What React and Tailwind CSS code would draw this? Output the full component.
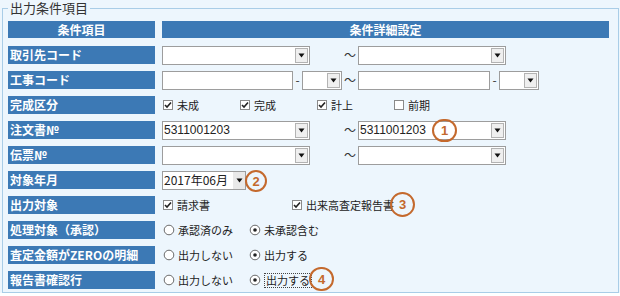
import React from "react";

const JP = "font-['Noto_Sans_CJK_JP','Noto_Sans',sans-serif]";

function Arrow() {
  return (
    <svg width="7" height="5" viewBox="0 0 7 5">
      <polygon points="0.5,0.5 6.5,0.5 3.5,4.5" fill="#111" />
    </svg>
  );
}

function Select({ width, value }) {
  return (
    <div className={`${width} h-[19px] bg-white border border-[#9d9d9d] flex items-center justify-between pl-[1px] pr-[1px]`}>
      <span className="text-[12px] leading-none text-[#222] font-['Liberation_Sans',sans-serif]">{value}</span>
      <span className="w-[13px] h-[15px] bg-[#efefef] border border-[#b3b3b3] flex items-center justify-center">
        <Arrow />
      </span>
    </div>
  );
}

function TextInput({ width }) {
  return <div className={`${width} h-[19px] bg-white border border-[#9d9d9d]`} />;
}

function Check({ checked, label, width }) {
  return (
    <div className={`${width} flex items-center gap-[4px]`}>
      <span className="ml-[1px] w-[10px] h-[10px] bg-white border border-[#8a8a8a] flex items-center justify-center">
        {checked && (
          <svg width="8" height="8" viewBox="0 0 8 8">
            <path d="M1 4 L3 6 L7 1.5" stroke="#222" strokeWidth="1.6" fill="none" />
          </svg>
        )}
      </span>
      <span className="text-[11px] leading-none text-[#222] whitespace-nowrap">{label}</span>
    </div>
  );
}

function Radio({ checked, label, width, focus }) {
  return (
    <div className={`${width} flex items-center gap-[3px]`}>
      <svg width="12" height="12" viewBox="0 0 12 12" className="ml-[1px]">
        <circle cx="6" cy="6" r="4.8" fill="#fff" stroke="#6b6b6b" strokeWidth="1" />
        {checked && <circle cx="6" cy="6" r="1.8" fill="#222" />}
      </svg>
      <span className={`text-[11px] leading-none text-[#222] whitespace-nowrap ${focus ? "border border-dotted border-[#444] px-[1px] py-[1px]" : ""}`}>{label}</span>
    </div>
  );
}

function Mark({ n, pos, size }) {
  return (
    <span className={`absolute ${pos} ${size} rounded-full border-2 border-[#c4692d] flex items-center justify-center text-[13px] font-bold leading-none text-[#c4692d] font-['Liberation_Sans',sans-serif]`}>
      {n}
    </span>
  );
}

const Tilde = () => <span className="w-[16px] text-center text-[12px] leading-none text-[#333]">～</span>;

function Row({ label, children }) {
  return (
    <div className="flex h-[25px] items-start gap-[7px]">
      <div className="w-[147px] h-[18px] bg-[#3c79b5] pl-[2px] flex items-center text-white text-[12px] font-bold leading-none whitespace-nowrap">
        {label}
      </div>
      <div className="relative w-[447px] h-[18px] flex items-center">{children}</div>
    </div>
  );
}

export default function App() {
  return (
    <div className={`w-[620px] h-[296px] bg-white ${JP}`}>
      <div className="h-[293px] bg-[#edf6fd] pl-[2px]">
        <fieldset className="w-[617px] h-[293px] border border-[#a9cde7] pl-[5px]">
          <legend className="px-[2px] text-[13px] leading-[16px] text-[#333]">出力条件項目</legend>
          <div className="mt-[5px] flex flex-col">
            <div className="flex h-[25px] items-start gap-[7px]">
              <div className="w-[147px] h-[17px] bg-[#3c79b5] flex items-center justify-center text-white text-[12px] font-bold leading-none">条件項目</div>
              <div className="w-[447px] h-[17px] bg-[#3c79b5] flex items-center justify-center text-white text-[12px] font-bold leading-none">条件詳細設定</div>
            </div>

            <Row label="取引先コード">
              <div className="w-[180px]"><Select width="w-[148px]" /></div>
              <Tilde />
              <Select width="w-[148px]" />
            </Row>

            <Row label="工事コード">
              <div className="w-[180px] flex items-center">
                <TextInput width="w-[131px]" />
                <span className="w-[9px] text-center text-[12px] leading-none text-[#333]">-</span>
                <Select width="w-[40px]" />
              </div>
              <Tilde />
              <div className="flex items-center">
                <TextInput width="w-[132px]" />
                <span className="w-[9px] text-center text-[12px] leading-none text-[#333]">-</span>
                <Select width="w-[40px]" />
              </div>
            </Row>

            <Row label="完成区分">
              <Check checked label="未成" width="w-[77px]" />
              <Check checked label="完成" width="w-[77px]" />
              <Check checked label="計上" width="w-[77px]" />
              <Check label="前期" width="w-[77px]" />
            </Row>

            <Row label="注文書№">
              <div className="w-[180px]"><Select width="w-[148px]" value="5311001203" /></div>
              <Tilde />
              <Select width="w-[148px]" value="5311001203" />
              <Mark n="1" pos="left-[270px] top-[-2px]" size="w-[25px] h-[23px]" />
            </Row>

            <Row label="伝票№">
              <div className="w-[180px]"><Select width="w-[148px]" /></div>
              <Tilde />
              <Select width="w-[148px]" />
            </Row>

            <Row label="対象年月">
              <div className="w-[84px] h-[19px] bg-white border border-[#9d9d9d] flex items-center justify-between pl-[1px]">
                <span className="text-[12px] leading-none text-[#222]">2017年06月</span>
                <span className="w-[12px] h-[17px] bg-[#e9e9e9] flex items-center justify-center"><Arrow /></span>
              </div>
              <Mark n="2" pos="left-[83px] top-[-1px]" size="w-[22px] h-[22px]" />
            </Row>

            <Row label="出力対象">
              <Check checked label="請求書" width="w-[129px]" />
              <Check checked label="出来高査定報告書" width="w-[110px]" />
              <Mark n="3" pos="left-[228px] top-[-4px]" size="w-[25px] h-[25px]" />
            </Row>

            <Row label="処理対象（承認）">
              <Radio label="承認済のみ" width="w-[86px]" />
              <Radio checked label="未承認含む" width="w-[100px]" />
            </Row>

            <Row label="査定金額がZEROの明細">
              <Radio label="出力しない" width="w-[86px]" />
              <Radio checked label="出力する" width="w-[100px]" />
            </Row>

            <Row label="報告書確認行">
              <Radio label="出力しない" width="w-[86px]" />
              <Radio checked focus label="出力する" width="w-[100px]" />
              <Mark n="4" pos="left-[147px] top-[-4px]" size="w-[25px] h-[24px]" />
            </Row>
          </div>
        </fieldset>
      </div>
    </div>
  );
}
